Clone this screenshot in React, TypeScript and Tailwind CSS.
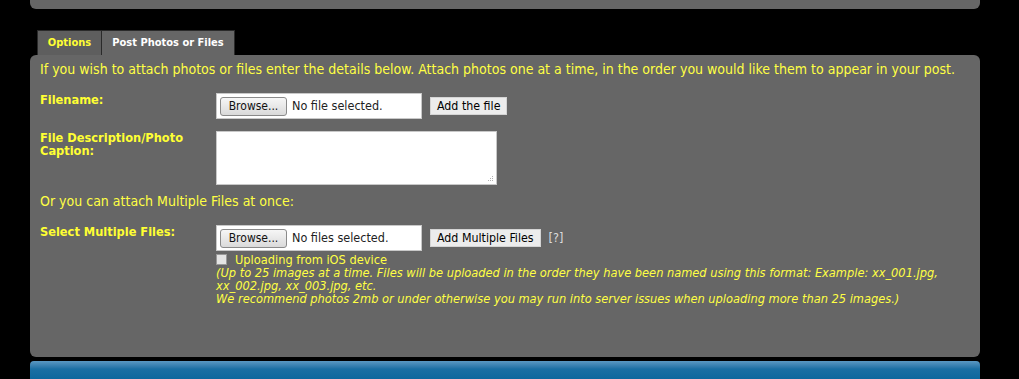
import React from "react";

const font = "font-['DejaVu_Sans_Condensed','DejaVu_Sans',sans-serif]";

function FileBox({ label }: { label: string }) {
  return (
    <div className="w-[206px] h-[26px] bg-white border border-[#c8c8c8] flex items-center pl-[3px]">
      <div className="w-[67px] h-[19px] rounded-[3px] border border-[#8a8a8a] bg-gradient-to-b from-[#f6f6f6] to-[#dadada] flex items-center justify-center text-[12px] text-[#111] leading-none">
        Browse...
      </div>
      <span className="ml-[5px] text-[12.5px] text-[#222] leading-none">{label}</span>
    </div>
  );
}

function GreyButton({ children }: { children: React.ReactNode }) {
  return (
    <div className="h-[18px] px-[6px] bg-[#ececec] border border-[#d4d4d4] flex items-center text-[12.3px] text-black leading-none">
      {children}
    </div>
  );
}

function ResizeGrip() {
  return (
    <svg className="absolute right-[2px] bottom-[2px]" width="7" height="7" viewBox="0 0 7 7">
      <rect x="5" y="1" width="1" height="1" fill="#b0b0b0" />
      <rect x="3" y="3" width="1" height="1" fill="#b0b0b0" />
      <rect x="5" y="3" width="1" height="1" fill="#b0b0b0" />
      <rect x="1" y="5" width="1" height="1" fill="#b0b0b0" />
      <rect x="3" y="5" width="1" height="1" fill="#b0b0b0" />
      <rect x="5" y="5" width="1" height="1" fill="#b0b0b0" />
    </svg>
  );
}

export default function App() {
  return (
    <div className={`min-h-screen bg-black ${font} font-stretch-condensed`}>
      <div className="ml-[30px] w-[950px]">
        {/* top panel remainder */}
        <div className="h-[9px] bg-[#666666] rounded-b-[6px]"></div>

        {/* tabs */}
        <div className="mt-[21px] pl-[7px] flex">
          <div className="h-[25px] w-[65px] bg-[#5e5e5e] border border-[#2a2a2a] border-b-0 flex items-center justify-center text-[11px] font-bold text-[#ffff33]">
            Options
          </div>
          <div className="h-[25px] w-[133px] bg-[#666666] border border-[#2a2a2a] border-l-0 border-b-0 flex items-center justify-center text-[11px] font-bold text-white">
            Post Photos or Files
          </div>
        </div>

        {/* main panel */}
        <div className="h-[302px] bg-[#666666] rounded-[6px] pl-[10px] pt-[6px] text-[#ffff44]">
          <p className="text-[14px] leading-[16px]">
            If you wish to attach photos or files enter the details below. Attach photos one at a time, in the order you would like them to appear in your post.
          </p>

          {/* filename */}
          <div className="mt-[16px] flex">
            <div className="w-[176px] text-[12.7px] font-bold leading-[13px] text-[#ffff33]">Filename:</div>
            <div className="flex items-center gap-[8px]">
              <FileBox label="No file selected." />
              <GreyButton>Add the file</GreyButton>
            </div>
          </div>

          {/* caption */}
          <div className="mt-[12px] flex">
            <div className="w-[176px] pr-[18px] text-[12.7px] font-bold leading-[13px] text-[#ffff33]">
              File Description/Photo Caption:
            </div>
            <div className="w-[281px] h-[54px] bg-white border border-[#c8c8c8] relative">
              <ResizeGrip />
            </div>
          </div>

          <p className="mt-[8px] text-[14px] leading-[16px]">Or you can attach Multiple Files at once:</p>

          {/* multiple */}
          <div className="mt-[16px] flex">
            <div className="w-[176px] text-[12.7px] font-bold leading-[13px] text-[#ffff33]">Select Multiple Files:</div>
            <div className="flex flex-col">
              <div className="flex items-center gap-[8px]">
                <FileBox label="No files selected." />
                <GreyButton>Add Multiple Files</GreyButton>
                <span className="text-[12.5px] text-[#dddddd]">[?]</span>
              </div>
              <div className="mt-[2px] flex items-center">
                <div className="w-[11px] h-[11px] border border-[#999] bg-[#e4e4e4]"></div>
                <span className="ml-[8px] text-[12.7px] leading-[13px]">Uploading from iOS device</span>
              </div>
              <div className="w-[745px] text-[12.7px] italic leading-[13px]">
                <p>
                  (Up to 25 images at a time. Files will be uploaded in the order they have been named using this format: Example: xx_001.jpg, xx_002.jpg, xx_003.jpg, etc.
                </p>
                <p>We recommend photos 2mb or under otherwise you may run into server issues when uploading more than 25 images.)</p>
              </div>
            </div>
          </div>
        </div>

        {/* blue bar */}
        <div className="mt-[4px] h-[20px] rounded-t-[4px] bg-gradient-to-b from-[#5a98c2] via-[#1a6fa3] via-40% to-[#0a669c]"></div>
      </div>
    </div>
  );
}
